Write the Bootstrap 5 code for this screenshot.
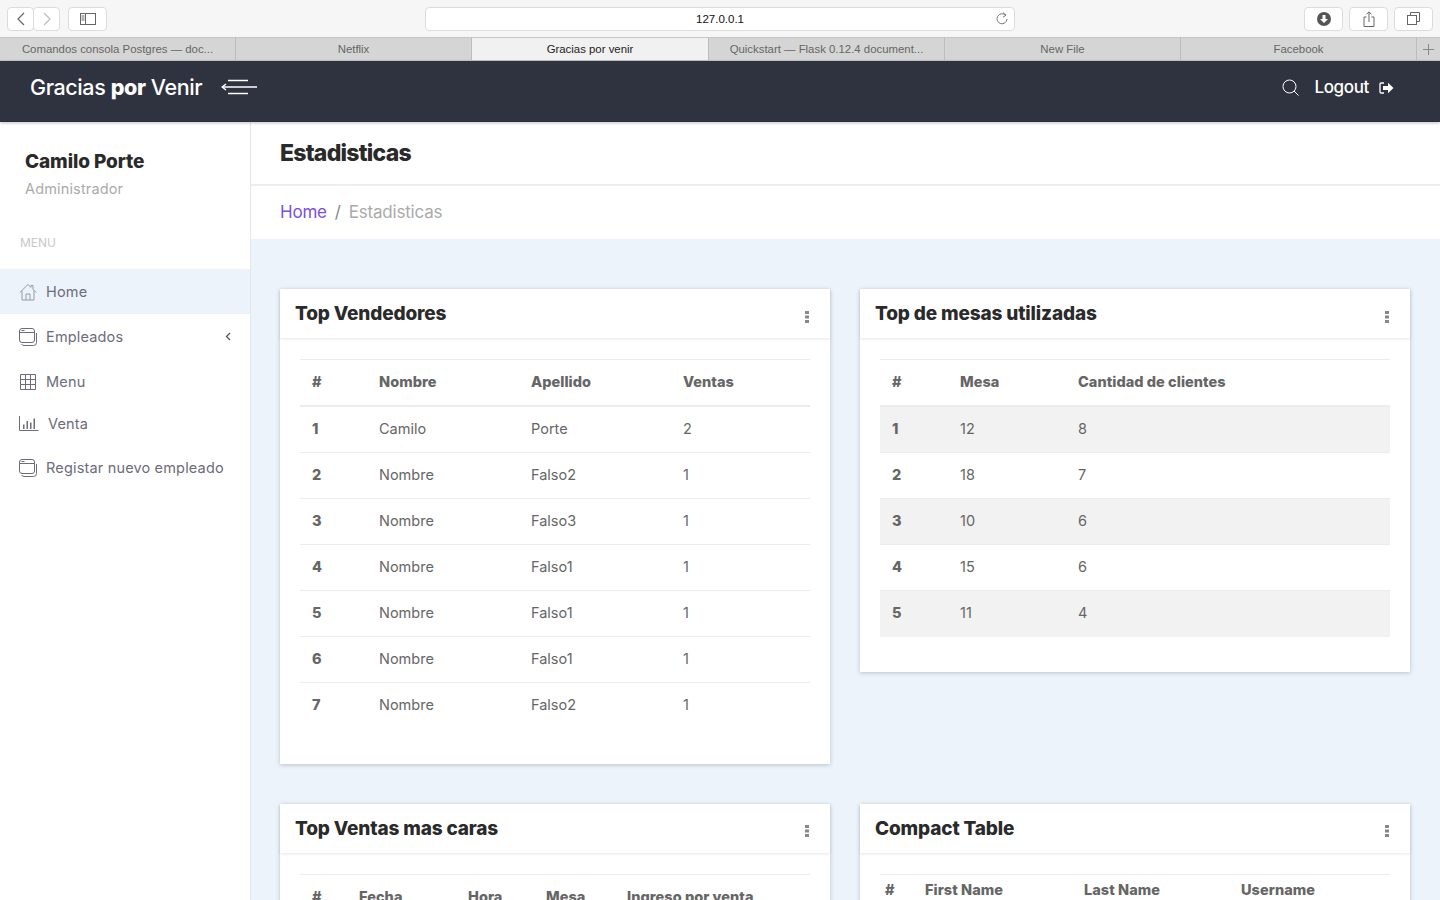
<!DOCTYPE html>
<html lang="es">
<head>
    <meta charset="UTF-8">
    <meta name="viewport" content="width=device-width, initial-scale=1.0">
    <title>Gracias por venir</title>
    <link rel="stylesheet" href="https://cdn.jsdelivr.net/npm/bootstrap@5.3.3/dist/css/bootstrap.min.css">
    <style>
        html, body { height: 100%; overflow: hidden; }
        body { font-family: Inter, "Open Sans", sans-serif; font-size: 14px; color: #666; background: #fff; }
        svg { display: block; flex: none; }

        /* navegador */
        .safari-bar { height: 38px; background: #f6f6f6; border-bottom: 1px solid #c6c6c6; padding: 7px; font-family: "Liberation Sans", sans-serif; }
        .safari-btn { height: 24px; background: #fff; border: 1px solid #dcdcdc; border-radius: 4px; display: flex; align-items: center; justify-content: center; }
        .safari-btn-nav { width: 27px; }
        .safari-btn-nav + .safari-btn-nav { margin-left: -1px; }
        .safari-btn-wide { width: 39px; }
        .safari-btn-gap { margin-left: 6px; }
        .safari-url { width: 590px; height: 24px; margin-left: 318px; background: #fff; border: 1px solid #dcdcdc; border-radius: 4px; font-size: 11.5px; color: #111; line-height: 22px; text-align: center; position: relative; }
        .safari-reload { position: absolute; right: 5px; top: 4px; }
        .safari-tabs { height: 23px; background: #d5d5d5; border-bottom: 1px solid #c6c6c6; font-family: "Liberation Sans", sans-serif; font-size: 11.4px; color: #666; }
        .safari-tab { width: 236px; line-height: 22px; text-align: center; border-right: 1px solid #bdbdbd; padding: 0 15px; white-space: nowrap; overflow: hidden; }
        .safari-tab-on { width: 237px; background: #f1f1f1; color: #222; }
        .safari-plus { flex: 1; display: flex; align-items: center; justify-content: center; }

        /* barra superior */
        .top-nav { height: 61px; background: #2f3340; padding: 0 46px 8px 30px; color: #fff; box-shadow: 0 1px 3px rgba(0,0,0,.25); position: relative; z-index: 2; }
        .brand-text { font-size: 21.5px; letter-spacing: -.4px; color: #fff; font-weight: 500; padding: 0; margin: 0 19px 0 0; }
        .brand-text b { font-weight: 800; }
        .brand-arrows { margin-top: -1px; }
        .logout-link { font-size: 17px; font-weight: 500; letter-spacing: -.35px; color: #fff; text-decoration: none; margin: 0 10px 0 15px; }

        /* lateral */
        .app-shell { height: 778px; }
        .side-panel { width: 251px; flex: none; background: #fff; border-right: 1px solid #e4e8ec; }
        .side-user { padding: 28px 25px 0; height: 110px; }
        .side-name { font-size: 19px; font-weight: 800; color: #2a2a2a; letter-spacing: -.1px; line-height: 24px; margin: 0; }
        .side-role { font-size: 14.5px; color: #aaa; letter-spacing: .15px; line-height: 20px; margin-top: 5px; }
        .side-label { font-size: 12px; color: #c8c8c8; padding: 0 20px; line-height: 22px; height: 37px; }
        .side-item { height: 45px; padding: 0 19px; gap: 9px; color: #6c6c7a; font-size: 14.5px; letter-spacing: .17px; text-decoration: none; }
        .side-item-on { background: #ecf3fa; }
        .side-item-short { height: 40px; margin-bottom: 1px; }
        .side-arrow { margin-left: auto; margin-right: 0; }

        /* contenido */
        .main-area { background: #ecf3fa; min-width: 0; }
        .page-head { height: 64px; background: #fff; border-bottom: 2px solid #eceff2; padding: 0 29px; }
        .page-title { font-size: 23px; font-weight: 800; letter-spacing: -.75px; color: #2a2a2a; margin: 1px 0 0; }
        .crumb-bar { height: 53px; background: #fff; padding: 0 29px; }
        .crumb-bar .breadcrumb { margin: 0; font-size: 17px; letter-spacing: -.2px; --bs-breadcrumb-divider-color: #888; --bs-breadcrumb-item-active-color: #aaa; }
        .crumb-bar a { color: #7b4fe0; text-decoration: none; }
        .cards-wrap { padding: 50px 30px 0 29px; }
        .cards-row { --bs-gutter-x: 30px; }
        .stat-box { border: 0; border-radius: 0; margin-bottom: 40px; box-shadow: 0 1px 4px rgba(60,70,90,.28); }
        .stat-head { height: 49px; background: #fff; border: 0; border-radius: 0 !important; padding: 0 15px; box-shadow: 0 1px 3px rgba(0,0,0,.1); position: relative; }
        .stat-title { font-size: 19px; font-weight: 800; letter-spacing: -.15px; color: #2a2a2a; margin: 2px 0 0; }
        .stat-dots { margin: 6px 6px 0 0; }
        .stat-body { padding: 21px 20px 15px; }
        .stat-table { --bs-table-border-color: #ececec; --bs-table-striped-bg: #f2f2f2; --bs-table-striped-color: #666; --bs-table-color: #666; margin-bottom: 20px; border-top: 1px solid #ececec; table-layout: fixed; font-size: 14.5px; }
        .stat-table th, .stat-table td { padding: 11px 12px 13px; height: 46px; line-height: 21px; vertical-align: middle; }
        .stat-table thead th { height: 46.5px; border-bottom: 2px solid #ececec; font-weight: 800; letter-spacing: .05px; color: #666; }
        .stat-table tbody th { font-weight: 800; }
        .stat-table tbody tr:last-child > * { border-bottom: 0; }
        .stat-compact thead th { padding: 4px 5px 6px; height: 31px; }
        .cw-67 { width: 67px; } .cw-152 { width: 152px; }
        .cw-68 { width: 68px; } .cw-118 { width: 118px; }
        .cw-47 { width: 47px; } .cw-109 { width: 109px; } .cw-78 { width: 78px; } .cw-81 { width: 81px; }
        .cw-40 { width: 40px; } .cw-159 { width: 159px; } .cw-157 { width: 157px; }
    </style>
</head>
<body>
    <div class="safari-bar d-flex align-items-center">
        <div class="d-flex me-2">
            <div class="safari-btn safari-btn-nav"><svg width="10" height="14" viewBox="0 0 10 14"><path d="M8 1 2 7l6 6" fill="none" stroke="#666" stroke-width="1.2"/></svg></div>
            <div class="safari-btn safari-btn-nav"><svg width="10" height="14" viewBox="0 0 10 14"><path d="m2 1 6 6-6 6" fill="none" stroke="#bbb" stroke-width="1.2"/></svg></div>
        </div>
        <div class="safari-btn safari-btn-wide"><svg width="16" height="12" viewBox="0 0 16 12"><rect x=".5" y=".5" width="15" height="11" fill="none" stroke="#666"/><path d="M5.500 0v12M1.500 3h3M1.500 5h3M1.500 7h3" stroke="#666" fill="none"/></svg></div>
        <div class="safari-url">127.0.0.1
            <svg class="safari-reload" width="14" height="14" viewBox="0 0 14 14"><path d="M10.500 3.200A5 5 0 1 0 12 7" fill="none" stroke="#777"/><path d="M8 .5 11 3.200 8 5.200" fill="none" stroke="#777"/></svg>
        </div>
        <div class="safari-btn safari-btn-wide ms-auto"><svg width="14" height="14" viewBox="0 0 14 14"><circle cx="7" cy="7" r="7" fill="#555"/><path d="M5.500 3h3v4H11l-4 4-4-4h2.500z" fill="#fff"/></svg></div>
        <div class="safari-btn safari-btn-wide safari-btn-gap"><svg width="12" height="16" viewBox="0 0 12 16"><path d="M3.500 6H1v9.500h10V6H8.500M6 11V1M3.500 3.300 6 .8l2.500 2.500" fill="none" stroke="#666"/></svg></div>
        <div class="safari-btn safari-btn-wide safari-btn-gap"><svg width="13" height="13" viewBox="0 0 13 13"><path d="M3.500 3V.5h9v9H10" fill="none" stroke="#666"/><rect x=".5" y="3.500" width="9" height="9" fill="none" stroke="#666"/></svg></div>
    </div>
    <div class="safari-tabs d-flex">
        <div class="safari-tab">Comandos consola Postgres — doc...</div>
        <div class="safari-tab">Netflix</div>
        <div class="safari-tab safari-tab-on">Gracias por venir</div>
        <div class="safari-tab">Quickstart — Flask 0.12.4 document...</div>
        <div class="safari-tab">New File</div>
        <div class="safari-tab">Facebook</div>
        <div class="safari-plus"><svg width="11" height="11" viewBox="0 0 11 11"><path d="M5.500 0v11M0 5.500h11" stroke="#888"/></svg></div>
    </div>

    <nav class="top-nav d-flex align-items-center">
        <a class="brand-text text-decoration-none" href="#">Gracias <b>por</b> Venir</a>
        <svg class="brand-arrows" width="36" height="16" viewBox="0 0 36 16"><path d="M2 8h34M7 1.500h20M7 14.500h20" stroke="#fff" stroke-width="1.500" fill="none"/><path d="M5 5 1.200 8 5 11" stroke="#fff" stroke-width="1.500" fill="none"/></svg>
        <svg class="ms-auto" width="17" height="17" viewBox="0 0 17 17"><circle cx="7.500" cy="7.500" r="6.500" fill="none" stroke="#fff" stroke-width="1"/><path d="m12 12 4.500 4.500" stroke="#fff" stroke-width="1"/></svg>
        <a class="logout-link" href="#">Logout</a>
        <svg width="15" height="12" viewBox="0 0 15 12"><path d="M5 1H2.200Q1 1 1 2.200v7.600Q1 11 2.200 11H5" fill="none" stroke="#fff" stroke-width="1.300"/><path d="M4 4h5V.8L14.500 6 9 11.200V8H4z" fill="#fff"/></svg>
    </nav>

    <div class="app-shell d-flex">
        <aside class="side-panel">
            <div class="side-user">
                <p class="side-name">Camilo Porte</p>
                <div class="side-role">Administrador</div>
            </div>
            <div class="side-label">MENU</div>
            <div class="d-flex flex-column">
                <a href="#" class="side-item side-item-on d-flex align-items-center">
                    <svg width="18" height="18" viewBox="0 0 18 18"><path d="M.8 9.500 9 1.500l3 2.900V2.500h2v3.800l3.200 3.200M3 7.500V17h12V7.500M7 17v-6h4v6" fill="none" stroke="#9a9aa6"/></svg>Home
                </a>
                <a href="#" class="side-item d-flex align-items-center">
                    <svg width="18" height="18" viewBox="0 0 18 18"><rect x=".5" y=".5" width="15" height="14" rx="2.500" fill="none" stroke="#6c6c7a"/><path d="M.5 4.500h15M2.500 2.500h3M17.500 5v9.500a3 3 0 0 1-3 3H5a3 3 0 0 1-2.500-1.500" fill="none" stroke="#6c6c7a"/></svg>Empleados
                    <svg class="side-arrow" width="6" height="9" viewBox="0 0 6 9"><path d="M5 1 1.500 4.500 5 8" fill="none" stroke="#555" stroke-width="1.300"/></svg>
                </a>
                <a href="#" class="side-item d-flex align-items-center">
                    <svg width="18" height="18" viewBox="0 0 18 18"><path d="M1.500 1.500h15v15h-15zM1.500 6.500h15M1.500 11.500h15M6.500 1.500v15M11.500 1.500v15" fill="none" stroke="#6c6c7a"/></svg>Menu
                </a>
                <a href="#" class="side-item side-item-short d-flex align-items-center">
                    <svg width="20" height="16" viewBox="0 0 20 16"><path d="M.5 0v14.500h19" fill="none" stroke="#6c6c7a"/><path d="M4 8.500h1.500V13H4zM7.500 5H9v8H7.500zM11 6.500h1.500V13H11zM14.500 2.500H16V13h-1.500z" fill="#6c6c7a"/></svg>Venta
                </a>
                <a href="#" class="side-item d-flex align-items-center">
                    <svg width="18" height="18" viewBox="0 0 18 18"><rect x=".5" y=".5" width="15" height="14" rx="2.500" fill="none" stroke="#6c6c7a"/><path d="M.5 4.500h15M2.500 2.500h3M17.500 5v9.500a3 3 0 0 1-3 3H5a3 3 0 0 1-2.500-1.500" fill="none" stroke="#6c6c7a"/></svg>Registar nuevo empleado
                </a>
            </div>
        </aside>

        <main class="main-area flex-grow-1 overflow-hidden">
            <div class="page-head d-flex align-items-center">
                <h1 class="page-title">Estadisticas</h1>
            </div>
            <div class="crumb-bar d-flex align-items-center">
                <ol class="breadcrumb">
                    <li class="breadcrumb-item"><a href="#">Home</a></li>
                    <li class="breadcrumb-item active">Estadisticas</li>
                </ol>
            </div>
            <div class="cards-wrap">
                <div class="row cards-row align-items-start">
                    <div class="col-6">
                        <div class="card stat-box">
                            <div class="card-header stat-head d-flex align-items-center justify-content-between">
                                <h5 class="stat-title">Top Vendedores</h5>
                                <svg class="stat-dots" width="4" height="12" viewBox="0 0 4 12"><path d="M0 0h4v3H0zM0 4.500h4v3H0zM0 9h4v3H0z" fill="#888"/></svg>
                            </div>
                            <div class="card-body stat-body">
                                <table class="table stat-table">
                                    <thead><tr><th class="cw-67">#</th><th class="cw-152">Nombre</th><th class="cw-152">Apellido</th><th>Ventas</th></tr></thead>
                                    <tbody>
                                        <tr><th>1</th><td>Camilo</td><td>Porte</td><td>2</td></tr>
                                        <tr><th>2</th><td>Nombre</td><td>Falso2</td><td>1</td></tr>
                                        <tr><th>3</th><td>Nombre</td><td>Falso3</td><td>1</td></tr>
                                        <tr><th>4</th><td>Nombre</td><td>Falso1</td><td>1</td></tr>
                                        <tr><th>5</th><td>Nombre</td><td>Falso1</td><td>1</td></tr>
                                        <tr><th>6</th><td>Nombre</td><td>Falso1</td><td>1</td></tr>
                                        <tr><th>7</th><td>Nombre</td><td>Falso2</td><td>1</td></tr>
                                    </tbody>
                                </table>
                            </div>
                        </div>
                    </div>
                    <div class="col-6">
                        <div class="card stat-box">
                            <div class="card-header stat-head d-flex align-items-center justify-content-between">
                                <h5 class="stat-title">Top de mesas utilizadas</h5>
                                <svg class="stat-dots" width="4" height="12" viewBox="0 0 4 12"><path d="M0 0h4v3H0zM0 4.500h4v3H0zM0 9h4v3H0z" fill="#888"/></svg>
                            </div>
                            <div class="card-body stat-body">
                                <table class="table table-striped stat-table">
                                    <thead><tr><th class="cw-68">#</th><th class="cw-118">Mesa</th><th>Cantidad de clientes</th></tr></thead>
                                    <tbody>
                                        <tr><th>1</th><td>12</td><td>8</td></tr>
                                        <tr><th>2</th><td>18</td><td>7</td></tr>
                                        <tr><th>3</th><td>10</td><td>6</td></tr>
                                        <tr><th>4</th><td>15</td><td>6</td></tr>
                                        <tr><th>5</th><td>11</td><td>4</td></tr>
                                    </tbody>
                                </table>
                            </div>
                        </div>
                    </div>
                    <div class="col-6">
                        <div class="card stat-box">
                            <div class="card-header stat-head d-flex align-items-center justify-content-between">
                                <h5 class="stat-title">Top Ventas mas caras</h5>
                                <svg class="stat-dots" width="4" height="12" viewBox="0 0 4 12"><path d="M0 0h4v3H0zM0 4.500h4v3H0zM0 9h4v3H0z" fill="#888"/></svg>
                            </div>
                            <div class="card-body stat-body">
                                <table class="table stat-table">
                                    <thead><tr><th class="cw-47">#</th><th class="cw-109">Fecha</th><th class="cw-78">Hora</th><th class="cw-81">Mesa</th><th>Ingreso por venta</th></tr></thead>
                                </table>
                            </div>
                        </div>
                    </div>
                    <div class="col-6">
                        <div class="card stat-box">
                            <div class="card-header stat-head d-flex align-items-center justify-content-between">
                                <h5 class="stat-title">Compact Table</h5>
                                <svg class="stat-dots" width="4" height="12" viewBox="0 0 4 12"><path d="M0 0h4v3H0zM0 4.500h4v3H0zM0 9h4v3H0z" fill="#888"/></svg>
                            </div>
                            <div class="card-body stat-body">
                                <table class="table table-sm stat-table stat-compact">
                                    <thead><tr><th class="cw-40">#</th><th class="cw-159">First Name</th><th class="cw-157">Last Name</th><th>Username</th></tr></thead>
                                </table>
                            </div>
                        </div>
                    </div>
                </div>
            </div>
        </main>
    </div>

    <script src="https://cdn.jsdelivr.net/npm/bootstrap@5.3.3/dist/js/bootstrap.bundle.min.js"></script>
</body>
</html>
